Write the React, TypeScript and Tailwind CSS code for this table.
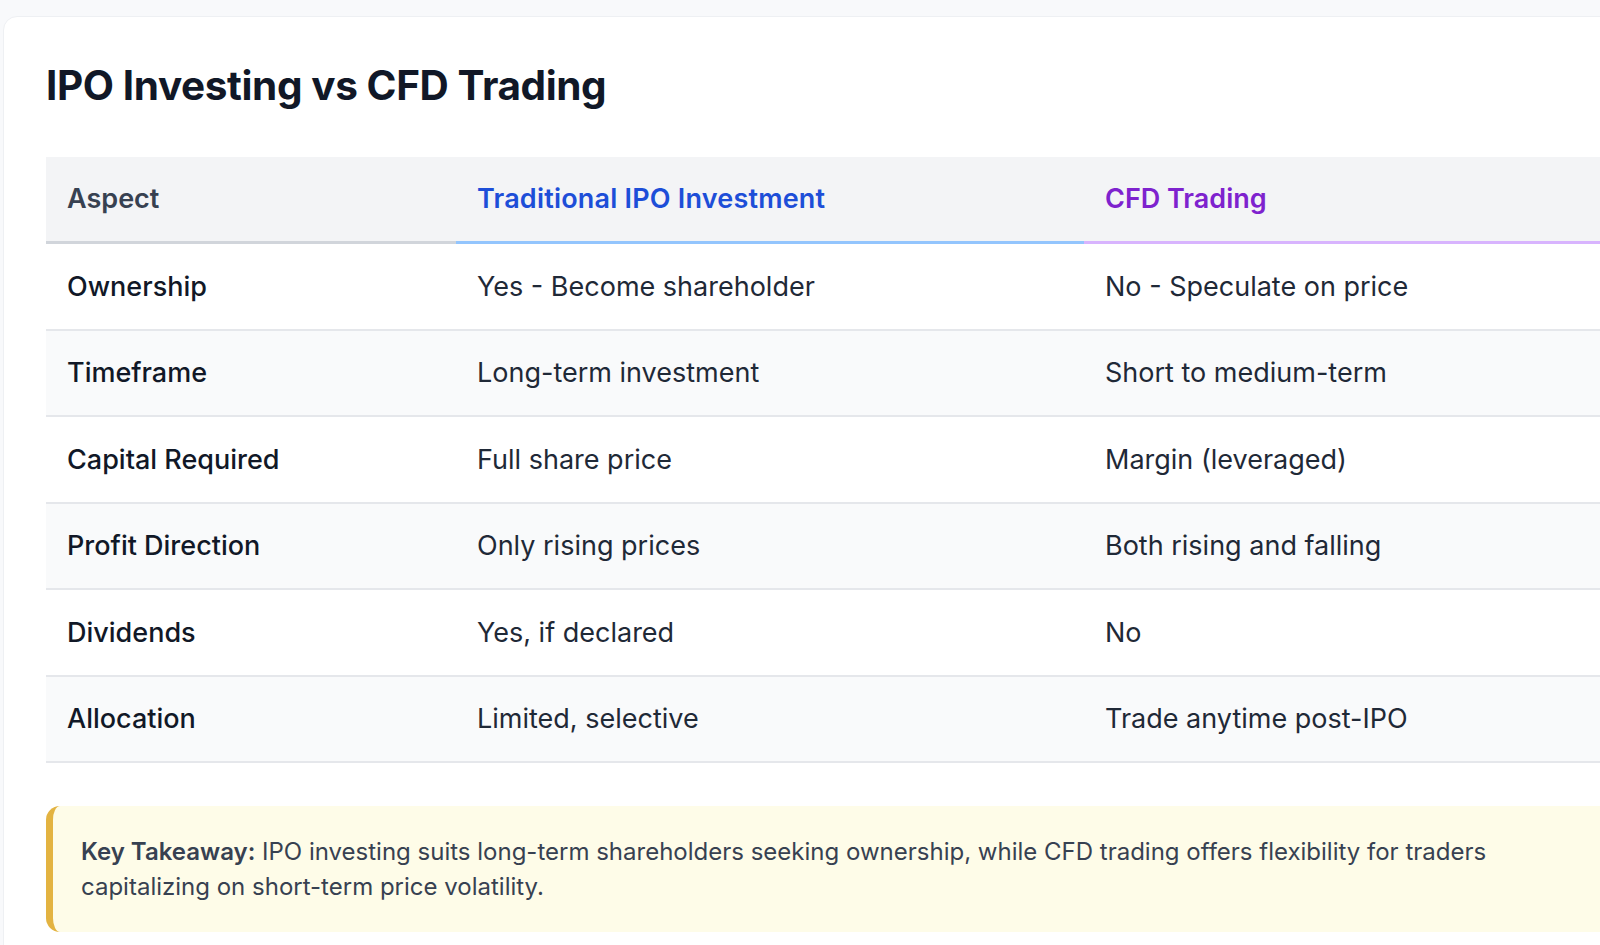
const rows = [
  { aspect: "Ownership", ipo: "Yes - Become shareholder", cfd: "No - Speculate on price" },
  { aspect: "Timeframe", ipo: "Long-term investment", cfd: "Short to medium-term" },
  { aspect: "Capital Required", ipo: "Full share price", cfd: "Margin (leveraged)" },
  { aspect: "Profit Direction", ipo: "Only rising prices", cfd: "Both rising and falling" },
  { aspect: "Dividends", ipo: "Yes, if declared", cfd: "No" },
  { aspect: "Allocation", ipo: "Limited, selective", cfd: "Trade anytime post-IPO" },
];

export default function App() {
  return (
    <div
      className="w-screen h-screen overflow-hidden bg-[#f8f9fb] pt-4 pl-[3px]"
      style={{ fontFamily: "Inter, 'Noto Sans', sans-serif" }}
    >
      <div className="w-[1740px] bg-white rounded-tl-[14px] border border-[#eef0f3] px-[42px] pt-[41px] pb-10">
        <h1 className="text-[40.5px] leading-[56px] font-bold text-[#111827] tracking-[-0.4px] mb-[43px]">
          IPO Investing vs CFD Trading
        </h1>

        {/* Comparison table */}
        <table className="w-[1650px] table-fixed border-collapse text-[27px] leading-[42px]">
          <colgroup>
            <col className="w-[410px]" />
            <col className="w-[628px]" />
            <col />
          </colgroup>
          <thead>
            <tr className="bg-[#f3f4f6]">
              <th className="text-left font-semibold text-[#374151] px-[21px] py-[21px] border-b-[3.5px] border-[#d1d5db]">
                Aspect
              </th>
              <th className="text-left font-semibold text-[#1d4ed8] tracking-[0.2px] px-[21px] py-[21px] border-b-[3.5px] border-[#93c5fd]">
                Traditional IPO Investment
              </th>
              <th className="text-left font-semibold text-[#7e22ce] px-[21px] py-[21px] border-b-[3.5px] border-[#d8b4fe]">
                CFD Trading
              </th>
            </tr>
          </thead>
          <tbody>
            {rows.map((r, i) => (
              <tr key={r.aspect} className={i % 2 === 1 ? "bg-[#f9fafb]" : "bg-white"}>
                <td className="px-[21px] pt-[21.5px] pb-[21px] border-b-2 border-[#e5e7eb] font-medium text-[#111827]">
                  {r.aspect}
                </td>
                <td className="px-[21px] pt-[21.5px] pb-[21px] border-b-2 border-[#e5e7eb] text-[#1f2937]">
                  {r.ipo}
                </td>
                <td className="px-[21px] pt-[21.5px] pb-[21px] border-b-2 border-[#e5e7eb] text-[#1f2937]">
                  {r.cfd}
                </td>
              </tr>
            ))}
          </tbody>
        </table>

        {/* Takeaway */}
        <div className="mt-[43px] w-[1650px] bg-[#fefce8] border-l-[7px] border-[#e3b341] rounded-[14px] py-[28px] pl-[28px] pr-[28px]">
          <p className="max-w-[1450px] text-[24px] leading-[35px] text-[#374151]">
            <strong className="font-semibold text-[#374151]">Key Takeaway:</strong> IPO investing suits long-term
            shareholders seeking ownership, while CFD trading offers flexibility for traders capitalizing on
            short-term price volatility.
          </p>
        </div>
      </div>
    </div>
  );
}
